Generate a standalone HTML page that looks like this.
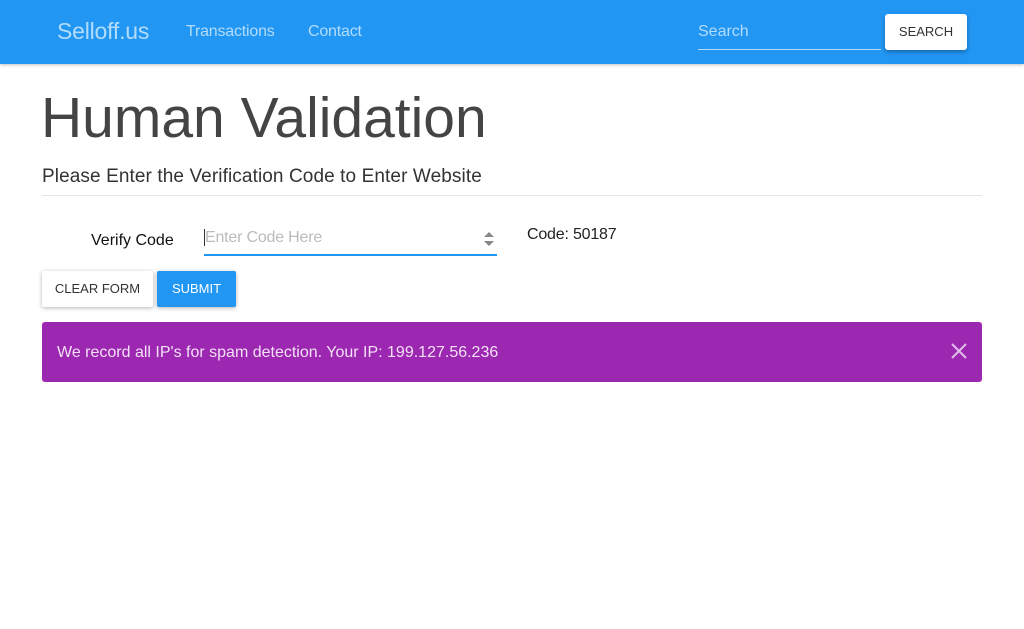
<!DOCTYPE html>
<html><head><meta charset="utf-8"><style>
*{box-sizing:border-box;margin:0;padding:0}
body{width:1024px;height:629px;background:#fff;font-family:"Liberation Sans",sans-serif;position:relative;overflow:hidden}
.nav{position:absolute;left:0;top:0;width:1024px;height:64px;background:#2196f3;box-shadow:0 1px 3px rgba(0,0,0,.25)}
.brand{position:absolute;left:57px;top:18px;font-size:23px;color:#b3dcfb;letter-spacing:-0.2px}
.lnk{position:absolute;top:23px;font-size:16px;color:#b3dcfb;letter-spacing:-0.2px}
.search{position:absolute;left:698px;top:23px;width:183px;height:27px;border-bottom:1px solid #b3dcfb;color:#b3dcfb;font-size:16px}
.sbtn{position:absolute;left:885px;top:14px;width:82px;height:36px;background:#fff;border-radius:3px;box-shadow:0 2px 4px rgba(0,0,0,.3);font-size:13px;color:#333;text-align:center;line-height:36px}
h1{position:absolute;left:41px;top:85px;font-size:57px;font-weight:normal;color:#444;letter-spacing:0}
.sub{position:absolute;left:42px;top:166px;font-size:19px;color:#333;letter-spacing:0.1px}
.hr{position:absolute;left:42px;top:195px;width:940px;height:1px;background:#e5e5e5}
.lbl{position:absolute;left:91px;top:232px;font-size:16px;color:#111}
.inp{position:absolute;left:204px;top:225px;width:293px;height:31px;border-bottom:2px solid #2196f3;font-size:16px;color:#bbb;padding-top:4px;letter-spacing:-0.2px}
.arr{position:absolute;right:2px;top:6px}
.code{position:absolute;left:527px;top:226px;font-size:16px;color:#222;letter-spacing:-0.2px}
.b1{position:absolute;left:42px;top:271px;width:111px;height:36px;background:#fff;box-shadow:0 1px 4px rgba(0,0,0,.3);border-radius:2px;font-size:13px;color:#333;text-align:center;line-height:36px}
.b2{position:absolute;left:157px;top:271px;width:79px;height:36px;background:#2196f3;box-shadow:0 1px 4px rgba(0,0,0,.3);border-radius:2px;font-size:13px;color:#fff;text-align:center;line-height:36px}
.al{position:absolute;left:42px;top:322px;width:940px;height:60px;background:#9c27b0;border-radius:3px;color:#f3e0f6;font-size:16px;padding:22px 15px 0;letter-spacing:0}
.x{position:absolute;left:909px;top:21px}
</style></head><body>
<div class="nav">
<div class="brand">Selloff.us</div>
<div class="lnk" style="left:186px">Transactions</div>
<div class="lnk" style="left:308px">Contact</div>
<div class="search">Search</div>
<div class="sbtn">SEARCH</div>
</div>
<h1>Human Validation</h1>
<div class="sub">Please Enter the Verification Code to Enter Website</div>
<div class="hr"></div>
<div class="lbl">Verify Code</div>
<div class="inp"><span style="border-left:1px solid #333"></span>Enter Code Here<div class="arr"><svg width="12" height="16"><path d="M1 6L6 1L11 6Z M1 10L6 15L11 10Z" fill="#888"/></svg></div></div>
<div class="code">Code: 50187</div>
<div class="b1">CLEAR FORM</div>
<div class="b2">SUBMIT</div>
<div class="al">We record all IP's for spam detection. Your IP: 199.127.56.236<svg class="x" width="16" height="16"><path d="M1 1L15 15M15 1L1 15" stroke="#e1bee7" stroke-width="2"/></svg></div>
</body></html>
